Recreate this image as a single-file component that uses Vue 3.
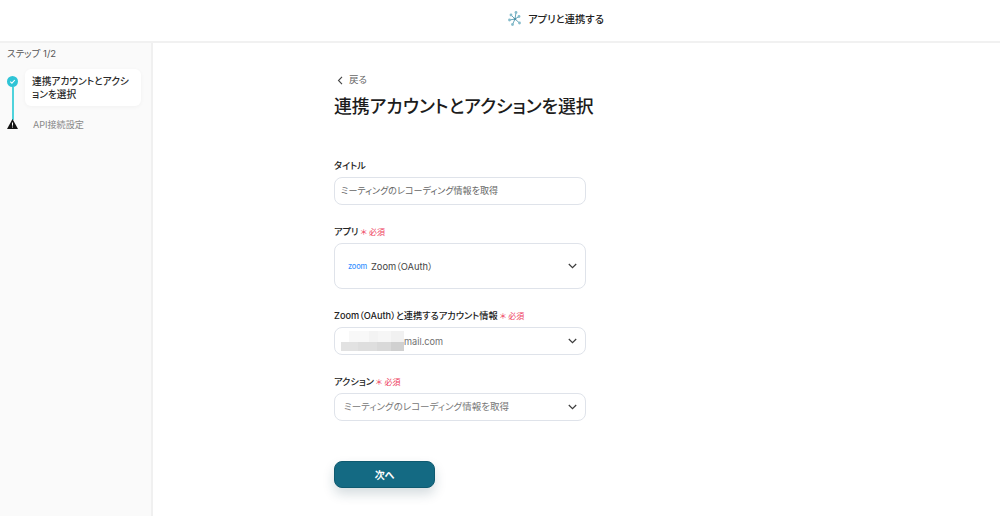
<script setup>
const fields = [
  { label: 'アプリ', kind: 'app', value: 'Zoom（OAuth）' },
  { label: 'Zoom（OAuth）と連携するアカウント情報', kind: 'account', value: 'mail.com' },
  { label: 'アクション', kind: 'action', value: 'ミーティングのレコーディング情報を取得' },
]

const blurTop = [
  { w: 8, c: '#ffffff' },
  { w: 20, c: '#f8f8f8' },
  { w: 9, c: '#f3f3f3' },
  { w: 13, c: '#f6f6f6' },
  { w: 13, c: '#f1f1f1' },
]

const blurBottom = [
  { w: 17, c: '#e2e2e2' },
  { w: 19, c: '#dedede' },
  { w: 14, c: '#d9d9d9' },
  { w: 13, c: '#d0d0d0' },
]

const arms = [
  [516, 13.5],
  [511, 16],
  [509.5, 21],
  [512.5, 25.5],
  [519.5, 24],
  [519, 17.500],
]
</script>

<template>
  <div class="page">
    <header class="topbar">
      <svg class="logo" width="16" height="16" viewBox="507 12 16 16" fill="none" stroke="#6aa8bb" stroke-width="1">
        <path v-for="(a, i) in arms" :key="i" :d="`M515 20L${a[0]} ${a[1]}`" />
        <circle cx="515" cy="20" r="1.300" fill="#4f93a8" stroke="none" />
        <circle v-for="(a, i) in arms" :key="'n' + i" :cx="a[0]" :cy="a[1]" r="1.400" fill="#86bccb" stroke="none" />
      </svg>
      <span class="topbar-title">アプリと連携する</span>
    </header>

    <div class="body">
      <aside class="sidebar">
        <div class="step-count">ステップ 1/2</div>
        <div class="steps">
          <div class="rail">
            <svg class="check" width="11" height="11" viewBox="0 0 11 11">
              <circle cx="5.500" cy="5.500" r="5.500" fill="#2fc4d6" />
              <path d="M3.200 5.600 4.900 7.200 7.800 4" fill="none" stroke="#fff" stroke-width="1.100" />
            </svg>
            <div class="rail-line"></div>
            <svg class="warn" width="11" height="10" viewBox="0 0 11 10">
              <path d="M5.500 0 11 10H0z" fill="#141414" />
              <rect x="5" y="3.500" width="1" height="3.200" fill="#fff" />
              <rect x="5" y="7.500" width="1" height="1" fill="#fff" />
            </svg>
          </div>
          <div class="step-labels">
            <div class="step-card">連携アカウントとアクションを選択</div>
            <div class="step-next">API接続設定</div>
          </div>
        </div>
      </aside>

      <main class="main">
        <div class="form">
          <a class="back">
            <svg width="7" height="9" viewBox="0 0 7 9" fill="none" stroke="#444" stroke-width="1.100">
              <path d="M5 .8 1.500 4.500 5 8.200" />
            </svg>
            <span>戻る</span>
          </a>
          <h1 class="heading">連携アカウントとアクションを選択</h1>

          <div class="field field-title">
            <label class="label">タイトル</label>
            <div class="box box-title">ミーティングのレコーディング情報を取得</div>
          </div>

          <div v-for="f in fields" :key="f.kind" class="field">
            <label class="label">
              {{ f.label }}
              <span class="required"><span class="star">＊</span>必須</span>
            </label>
            <div class="box select" :class="`box-${f.kind}`">
              <span v-if="f.kind === 'app'" class="zoom-logo">zoom</span>
              <div v-if="f.kind === 'account'" class="blur-mask">
                <div class="blur-row blur-row-top">
                  <i v-for="(c, i) in blurTop" :key="i" :style="{ width: c.w + 'px', background: c.c }"></i>
                </div>
                <div class="blur-row blur-row-bottom">
                  <i v-for="(c, i) in blurBottom" :key="i" :style="{ width: c.w + 'px', background: c.c }"></i>
                </div>
              </div>
              <span class="value">{{ f.value }}</span>
              <svg class="chevron" width="9" height="6" viewBox="0 0 9 6" fill="none" stroke="#3c3c3c" stroke-width="1.200">
                <path d="M.8 1 4.500 4.700 8.200 1" />
              </svg>
            </div>
          </div>

          <button class="next" type="button">次へ</button>
        </div>
      </main>
    </div>
  </div>
</template>

<style>
html,
body {
  margin: 0;
  background: #fff;
}
</style>

<style scoped>
.page {
  width: 1000px;
  height: 516px;
  overflow: hidden;
  display: flex;
  flex-direction: column;
  font-family: "Inter", "Noto Sans CJK JP", sans-serif;
  font-feature-settings: "palt";
  color: #222;
}

.topbar {
  height: 41px;
  flex: none;
  box-sizing: border-box;
  display: flex;
  align-items: center;
  justify-content: center;
  gap: 5px;
  padding-left: 111px;
  padding-bottom: 5px;
  background: #fff;
}

.logo {
  margin-top: 2px;
}

.topbar-title {
  font-size: 10.300px;
  font-weight: 500;
  color: #222;
}

.body {
  flex: 1;
  display: flex;
  border-top: 2px solid #f1f1f1;
  min-height: 0;
}

.sidebar {
  width: 153px;
  flex: none;
  box-sizing: border-box;
  background: #fafafa;
  border-right: 2px solid #f0f0f0;
  padding: 4px 10px 0 7px;
}

.step-count {
  font-size: 9.500px;
  line-height: 14px;
  color: #555;
}

.steps {
  display: flex;
  margin-top: 8px;
}

.rail {
  width: 11px;
  flex: none;
  display: flex;
  flex-direction: column;
  align-items: center;
  padding-top: 7px;
}

.rail-line {
  width: 2px;
  height: 33px;
  background: #4fd3dc;
}

.warn {
  margin-top: -1px;
}

.step-labels {
  margin-left: 7px;
  flex: 1;
}

.step-card {
  box-sizing: border-box;
  width: 116px;
  height: 37px;
  padding: 6px 7px;
  background: #fff;
  border-radius: 6px;
  box-shadow: 0 1px 4px rgba(0, 0, 0, 0.04);
  font-size: 9.700px;
  line-height: 13px;
  font-weight: 500;
  color: #2a2a2a;
}

.step-next {
  margin: 12px 0 0 8px;
  font-size: 9.100px;
  line-height: 14px;
  color: #888;
}

.main {
  flex: 1;
  padding-left: 181px;
}

.form {
  width: 252px;
  padding-top: 30px;
}

.back {
  display: flex;
  align-items: center;
  gap: 5px;
  padding-left: 3px;
  font-size: 9.500px;
  line-height: 14px;
  color: #666;
}

.heading {
  margin: 7px 0 0;
  font-size: 17.850px;
  line-height: 26px;
  font-weight: 500;
  color: #1c1c1c;
  white-space: nowrap;
}

.field {
  display: flex;
  flex-direction: column;
  margin-top: 19px;
}

.field-title {
  margin-top: 38px;
}

.label {
  display: flex;
  align-items: center;
  height: 14px;
  margin-bottom: 5px;
  font-size: 9.200px;
  font-weight: 500;
  color: #222;
  white-space: nowrap;
}

.required {
  margin-left: 2px;
  font-size: 8px;
  font-weight: 400;
  color: #ee3b5c;
}

.star {
  margin-right: 2px;
}

.box {
  box-sizing: border-box;
  height: 28px;
  border: 1px solid #dfe3ea;
  border-radius: 8px;
  background: #fff;
  display: flex;
  align-items: center;
  font-size: 9.500px;
  color: #666;
}

.box-title {
  padding: 0 0 2px 6px;
  font-size: 9.050px;
}

.select {
  position: relative;
  padding: 0 9px;
}

.box-app {
  height: 46px;
  padding-left: 13px;
  font-size: 9.300px;
  color: #444;
}

.zoom-logo {
  width: 18px;
  margin-right: 5px;
  font-size: 7.500px;
  font-weight: 500;
  letter-spacing: -0.2px;
  color: #3a94ff;
}

.box-action {
  padding-bottom: 2px;
  color: #777;
}

.box-account {
  padding-left: 6px;
  font-size: 9.200px;
  color: #707070;
}

.blur-mask {
  display: flex;
  flex-direction: column;
}

.blur-row {
  display: flex;
}

.blur-row i {
  display: block;
}

.blur-row-top {
  height: 11px;
}

.blur-row-bottom {
  height: 9px;
}

.value {
  position: relative;
}

.chevron {
  position: absolute;
  right: 8px;
  top: 50%;
  margin-top: -3px;
}

.next {
  display: block;
  width: 101px;
  height: 27px;
  margin-top: 40px;
  border: 1px solid #0f5a70;
  border-radius: 8px;
  background: #146a83;
  box-shadow: 0 6px 12px rgba(20, 60, 80, 0.18);
  font-family: inherit;
  font-feature-settings: inherit;
  font-size: 10px;
  font-weight: 700;
  color: #fff;
}
</style>
